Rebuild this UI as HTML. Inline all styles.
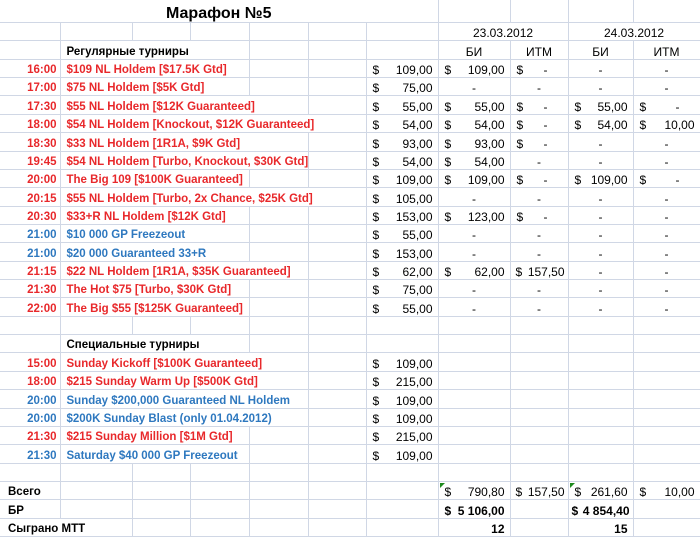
<!DOCTYPE html>
<html><head><meta charset="utf-8">
<style>
html,body{margin:0;padding:0;background:#fff;}
body{width:700px;height:537px;overflow:hidden;font-family:"Liberation Sans",Arial,sans-serif;font-size:12px;color:#000;}
table{border-collapse:collapse;table-layout:fixed;width:700px;position:absolute;left:0;top:0;}
td{border-right:1px solid #d0d7e5;border-bottom:1px solid #d0d7e5;padding:0;white-space:nowrap;overflow:hidden;height:17.36px;line-height:13px;position:relative;vertical-align:bottom;}
tr.t td{height:22px;}
.tm{text-align:right;font-weight:bold;padding-right:3px;font-size:11.5px;}
.r{color:#e8282b;}
.b{color:#2e78bf;}
.nm{font-weight:bold;padding-left:6px;font-size:11.5px;letter-spacing:0px;}
.h{font-weight:bold;padding-left:6px;font-size:11.5px;}
.a{display:flex;justify-content:space-between;padding:0 5px 0 6px;}
.a2{display:flex;justify-content:space-between;padding:0 20px 0 6px;}
.c{text-align:center;}
.rt{text-align:right;padding-right:5px;}
.bold{font-weight:bold;}
.tri::before{content:"";position:absolute;left:1px;top:1px;border-top:5px solid #1e8a1e;border-right:5px solid transparent;}
</style></head><body>
<table>
<colgroup><col style="width:60px"><col style="width:72px"><col style="width:58px"><col style="width:59px"><col style="width:59px"><col style="width:58px"><col style="width:72px"><col style="width:72px"><col style="width:58px"><col style="width:65px"><col style="width:67px"></colgroup>
<tr class="t"><td colspan="7" style="text-align:center;font-weight:bold;font-size:16px;line-height:16px;">Марафон №5</td><td></td><td></td><td></td><td></td></tr>
<tr><td></td><td></td><td></td><td></td><td></td><td></td><td></td><td colspan="2" class="c">23.03.2012</td><td colspan="2" class="c">24.03.2012</td></tr>
<tr><td></td><td colspan="3" class="h">Регулярные турниры</td><td></td><td></td><td></td><td class="c">БИ</td><td class="c">ИТМ</td><td class="c">БИ</td><td class="c">ИТМ</td></tr>

<tr><td class="tm r">16:00</td><td colspan="3" class="nm r">$109 NL Holdem [$17.5K Gtd]</td><td></td><td></td><td><div class="a"><span>$</span><span>109,00</span></div></td><td><div class="a"><span>$</span><span>109,00</span></div></td><td><div class="a2"><span>$</span><span>-</span></div></td><td class="c">-</td><td class="c">-</td></tr>
<tr><td class="tm r">17:00</td><td colspan="3" class="nm r">$75 NL Holdem [$5K Gtd]</td><td></td><td></td><td><div class="a"><span>$</span><span>75,00</span></div></td><td class="c">-</td><td class="c">-</td><td class="c">-</td><td class="c">-</td></tr>
<tr><td class="tm r">17:30</td><td colspan="4" class="nm r">$55 NL Holdem [$12K Guaranteed]</td><td></td><td><div class="a"><span>$</span><span>55,00</span></div></td><td><div class="a"><span>$</span><span>55,00</span></div></td><td><div class="a2"><span>$</span><span>-</span></div></td><td><div class="a"><span>$</span><span>55,00</span></div></td><td><div class="a2"><span>$</span><span>-</span></div></td></tr>
<tr><td class="tm r">18:00</td><td colspan="5" class="nm r">$54 NL Holdem [Knockout, $12K Guaranteed]</td><td><div class="a"><span>$</span><span>54,00</span></div></td><td><div class="a"><span>$</span><span>54,00</span></div></td><td><div class="a2"><span>$</span><span>-</span></div></td><td><div class="a"><span>$</span><span>54,00</span></div></td><td><div class="a"><span>$</span><span>10,00</span></div></td></tr>
<tr><td class="tm r">18:30</td><td colspan="4" class="nm r">$33 NL Holdem [1R1A, $9K Gtd]</td><td></td><td><div class="a"><span>$</span><span>93,00</span></div></td><td><div class="a"><span>$</span><span>93,00</span></div></td><td><div class="a2"><span>$</span><span>-</span></div></td><td class="c">-</td><td class="c">-</td></tr>
<tr><td class="tm r">19:45</td><td colspan="4" class="nm r">$54 NL Holdem [Turbo, Knockout, $30K Gtd]</td><td></td><td><div class="a"><span>$</span><span>54,00</span></div></td><td><div class="a"><span>$</span><span>54,00</span></div></td><td class="c">-</td><td class="c">-</td><td class="c">-</td></tr>
<tr><td class="tm r">20:00</td><td colspan="3" class="nm r">The Big 109 [$100K Guaranteed]</td><td></td><td></td><td><div class="a"><span>$</span><span>109,00</span></div></td><td><div class="a"><span>$</span><span>109,00</span></div></td><td><div class="a2"><span>$</span><span>-</span></div></td><td><div class="a"><span>$</span><span>109,00</span></div></td><td><div class="a2"><span>$</span><span>-</span></div></td></tr>
<tr><td class="tm r">20:15</td><td colspan="5" class="nm r">$55 NL Holdem [Turbo, 2x Chance, $25K Gtd]</td><td><div class="a"><span>$</span><span>105,00</span></div></td><td class="c">-</td><td class="c">-</td><td class="c">-</td><td class="c">-</td></tr>
<tr><td class="tm r">20:30</td><td colspan="3" class="nm r">$33+R NL Holdem [$12K Gtd]</td><td></td><td></td><td><div class="a"><span>$</span><span>153,00</span></div></td><td><div class="a"><span>$</span><span>123,00</span></div></td><td><div class="a2"><span>$</span><span>-</span></div></td><td class="c">-</td><td class="c">-</td></tr>
<tr><td class="tm b">21:00</td><td colspan="3" class="nm b">$10 000 GP Freezeout</td><td></td><td></td><td><div class="a"><span>$</span><span>55,00</span></div></td><td class="c">-</td><td class="c">-</td><td class="c">-</td><td class="c">-</td></tr>
<tr><td class="tm b">21:00</td><td colspan="3" class="nm b">$20 000 Guaranteed 33+R</td><td></td><td></td><td><div class="a"><span>$</span><span>153,00</span></div></td><td class="c">-</td><td class="c">-</td><td class="c">-</td><td class="c">-</td></tr>
<tr><td class="tm r">21:15</td><td colspan="4" class="nm r">$22 NL Holdem [1R1A, $35K Guaranteed]</td><td></td><td><div class="a"><span>$</span><span>62,00</span></div></td><td><div class="a"><span>$</span><span>62,00</span></div></td><td><div class="a" style="padding:0 3px 0 5px"><span>$</span><span>157,50</span></div></td><td class="c">-</td><td class="c">-</td></tr>
<tr><td class="tm r">21:30</td><td colspan="3" class="nm r">The Hot $75 [Turbo, $30K Gtd]</td><td></td><td></td><td><div class="a"><span>$</span><span>75,00</span></div></td><td class="c">-</td><td class="c">-</td><td class="c">-</td><td class="c">-</td></tr>
<tr><td class="tm r">22:00</td><td colspan="3" class="nm r">The Big $55 [$125K Guaranteed]</td><td></td><td></td><td><div class="a"><span>$</span><span>55,00</span></div></td><td class="c">-</td><td class="c">-</td><td class="c">-</td><td class="c">-</td></tr>

<tr><td></td><td></td><td></td><td></td><td></td><td></td><td></td><td></td><td></td><td></td><td></td></tr>
<tr><td></td><td colspan="3" class="h">Специальные турниры</td><td></td><td></td><td></td><td></td><td></td><td></td><td></td></tr>
<tr><td class="tm r">15:00</td><td colspan="4" class="nm r">Sunday Kickoff [$100K Guaranteed]</td><td></td><td><div class="a"><span>$</span><span>109,00</span></div></td><td></td><td></td><td></td><td></td></tr>
<tr><td class="tm r">18:00</td><td colspan="4" class="nm r">$215 Sunday Warm Up [$500K Gtd]</td><td></td><td><div class="a"><span>$</span><span>215,00</span></div></td><td></td><td></td><td></td><td></td></tr>
<tr><td class="tm b">20:00</td><td colspan="4" class="nm b">Sunday $200,000 Guaranteed NL Holdem</td><td></td><td><div class="a"><span>$</span><span>109,00</span></div></td><td></td><td></td><td></td><td></td></tr>
<tr><td class="tm b">20:00</td><td colspan="4" class="nm b">$200K Sunday Blast (only 01.04.2012)</td><td></td><td><div class="a"><span>$</span><span>109,00</span></div></td><td></td><td></td><td></td><td></td></tr>
<tr><td class="tm r">21:30</td><td colspan="3" class="nm r">$215 Sunday Million [$1M Gtd]</td><td></td><td></td><td><div class="a"><span>$</span><span>215,00</span></div></td><td></td><td></td><td></td><td></td></tr>
<tr><td class="tm b">21:30</td><td colspan="3" class="nm b">Saturday $40 000 GP Freezeout</td><td></td><td></td><td><div class="a"><span>$</span><span>109,00</span></div></td><td></td><td></td><td></td><td></td></tr>

<tr><td></td><td></td><td></td><td></td><td></td><td></td><td></td><td></td><td></td><td></td><td></td></tr>
<tr><td class="h" style="padding-left:8px">Всего</td><td></td><td></td><td></td><td></td><td></td><td></td><td class="tri"><div class="a"><span>$</span><span>790,80</span></div></td><td><div class="a" style="padding:0 3px 0 5px"><span>$</span><span>157,50</span></div></td><td class="tri"><div class="a"><span>$</span><span>261,60</span></div></td><td><div class="a"><span>$</span><span>10,00</span></div></td></tr>
<tr><td class="h" style="padding-left:8px">БР</td><td></td><td></td><td></td><td></td><td></td><td></td><td class="bold"><div class="a"><span>$</span><span>5 106,00</span></div></td><td></td><td class="bold"><div class="a" style="padding:0 3px"><span>$</span><span>4 854,40</span></div></td><td></td></tr>
<tr><td colspan="2" class="h" style="padding-left:8px;border-right:1px solid #d0d7e5">Сыграно МТТ</td><td></td><td></td><td></td><td></td><td></td><td class="rt bold">12</td><td></td><td class="rt bold">15</td><td></td></tr>
</table>
</body></html>
